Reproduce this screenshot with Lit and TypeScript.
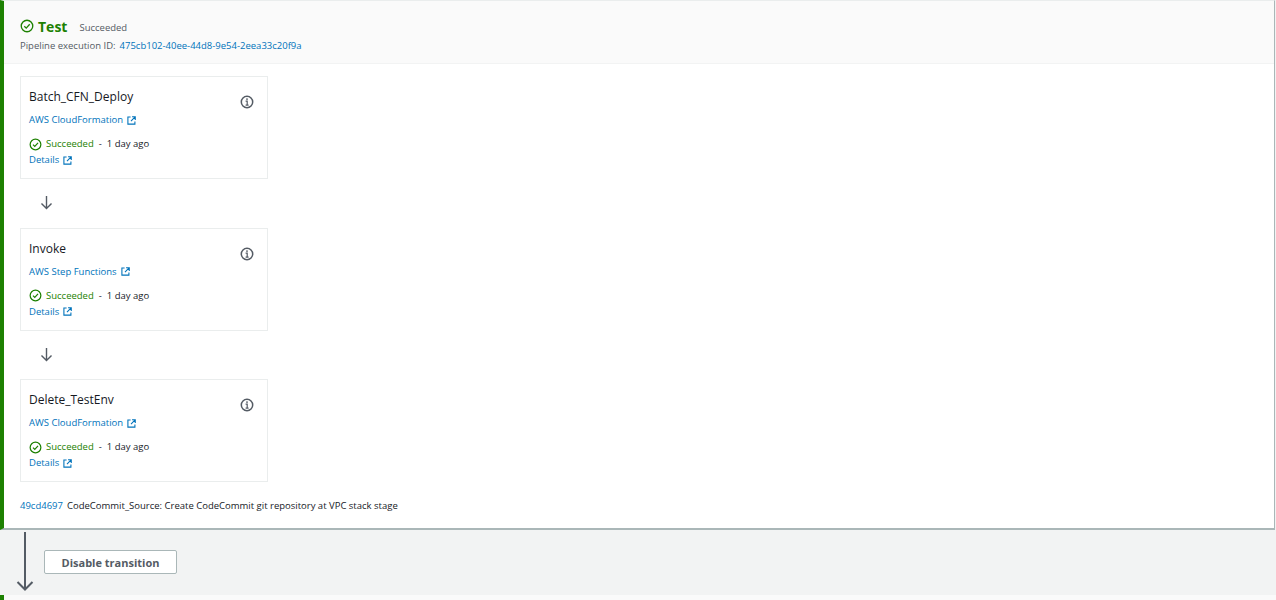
import { LitElement, html, css, svg } from "lit";
import { customElement } from "lit/decorators.js";

const check = (cls: string) => html`<svg class=${cls} viewBox="0 0 16 16" fill="none" stroke="currentColor" stroke-width="1.5"><circle cx="8" cy="8" r="6.6"/><path d="M4.9 8.2l2.2 2.2 4-4.4"/></svg>`;
const ext = html`<svg class="ext" viewBox="0 0 10 10" fill="none" stroke="currentColor" stroke-width="1.2"><path d="M4 1.2H1v7.8h7.8V6M5.6.8h3.6v3.6M9 1L4.4 5.6"/></svg>`;
const info = html`<svg class="info" viewBox="0 0 14 14" fill="none" stroke="#545b64" stroke-width="1.5"><circle cx="7" cy="7" r="5.7"/><path d="M5.6 6.2H7.2V10M5.6 10.2H8.6" stroke-width="1.2"/><circle cx="7" cy="4.1" r=".9" fill="#545b64" stroke="none"/></svg>`;
const arrow = html`<svg class="arrow" viewBox="0 0 14 16" fill="none" stroke="#545b64" stroke-width="1.5"><path d="M7 1v13.5M1.6 9l5.4 5.5L12.4 9"/></svg>`;

const actions = [
  { name: "Batch_CFN_Deploy", provider: "AWS CloudFormation" },
  { name: "Invoke", provider: "AWS Step Functions" },
  { name: "Delete_TestEnv", provider: "AWS CloudFormation" },
];

@customElement("app-root")
export class AppRoot extends LitElement {
  static styles = css`
    :host { display: block; height: 600px; overflow: hidden; background: #f2f3f3; font-family: "Open Sans", "Liberation Sans", sans-serif; font-size: 10px; color: #16191f; }
    a { color: #0073bb; text-decoration: none; }
    .stage { width: 1270px; height: 530px; box-sizing: border-box; background: #fff; border-left: 4px solid #1d8102; border-right: 1px solid #aab7b8; border-bottom: 2px solid #aab7b8; border-top: 1px solid #eaeded; margin-right: 1px; width: 1275px; }
    .head { height: 63px; background: #fafafa; box-sizing: border-box; padding: 15px 0 0 16px; border-bottom: 1px solid #f2f3f3; }
    .title { display: flex; align-items: center; height: 20px; }
    .title-check { width: 14px; height: 14px; color: #1d8102; margin-right: 4px; }
    .title b { font-size: 14px; font-weight: 700; color: #1d8102; margin-right: 12px; }
    .title span { font-size: 9.5px; color: #545b64; padding-top: 2px; }
    .exec { display: flex; gap: 4px; margin-top: 3px; font-size: 9.5px; color: #545b64; line-height: 14px; }
    .body { padding: 12px 0 0 16px; }
    .card { width: 248px; height: 103px; box-sizing: border-box; border: 1px solid #eaeded; padding: 11px 8px 0; position: relative; background: #fff; }
    .name { font-size: 12px; line-height: 17px; color: #16191f; }
    .info { position: absolute; right: 13px; top: 18px; width: 14px; height: 14px; }
    .prov { display: flex; align-items: center; gap: 4px; font-size: 9.5px; line-height: 14px; margin-top: 8px; }
    .ext { width: 9px; height: 9px; }
    .status { display: flex; align-items: center; margin-top: 10px; line-height: 14px; font-size: 9.5px; }
    .status-check { width: 13px; height: 13px; color: #1d8102; margin-right: 4px; }
    .ok { color: #1d8102; }
    .ago { margin-left: 5px; color: #16191f; }
    .det { display: flex; align-items: center; gap: 4px; font-size: 9.5px; line-height: 14px; margin-top: 2px; }
    .link { height: 48.5px; box-sizing: border-box; padding: 16px 0 0 20px; }
    .arrow { display: block; width: 13px; height: 15px; }
    .commit { display: flex; gap: 4px; margin-top: 17px; font-size: 9.5px; line-height: 14px; }
    .trans { height: 65px; display: flex; box-sizing: border-box; }
    .bigarrow { width: 18px; height: 60px; margin: 2px 0 0 16px; }
    .btn { align-self: flex-start; margin: 20px 0 0 10px; width: 133px; height: 24px; box-sizing: border-box; border: 1px solid #aab7b8; border-radius: 2px; background: #fff; color: #545b64; font: 700 11px "Open Sans", "Liberation Sans", sans-serif; padding: 0; }
    .next { height: 10px; background: #fafafa; border-left: 4px solid #1d8102; }
  `;

  render() {
    return html`
      <div class="stage">
        <div class="head">
          <div class="title">${check("title-check")}<b>Test</b><span>Succeeded</span></div>
          <div class="exec"><span>Pipeline execution ID:</span><a href="#">475cb102-40ee-44d8-9e54-2eea33c20f9a</a></div>
        </div>
        <div class="body">
          ${actions.map((a, i) => html`
            ${i > 0 ? html`<div class="link">${arrow}</div>` : ""}
            <div class="card">
              <div class="name">${a.name}</div>
              ${info}
              <a class="prov" href="#">${a.provider} ${ext}</a>
              <div class="status">${check("status-check")}<span class="ok">Succeeded</span><span class="ago">-&nbsp; 1 day ago</span></div>
              <a class="det" href="#">Details ${ext}</a>
            </div>`)}
          <div class="commit"><a href="#">49cd4697</a><span>CodeCommit_Source: Create CodeCommit git repository at VPC stack stage</span></div>
        </div>
      </div>
      <div class="trans">
        <svg class="bigarrow" viewBox="0 0 18 60" fill="none" stroke="#545b64" stroke-width="2"><path d="M9 0v57.5M1.5 50l7.5 7.5 7.5-7.5"/></svg>
        <button class="btn">Disable transition</button>
      </div>
      <div class="next"></div>
    `;
  }
}
